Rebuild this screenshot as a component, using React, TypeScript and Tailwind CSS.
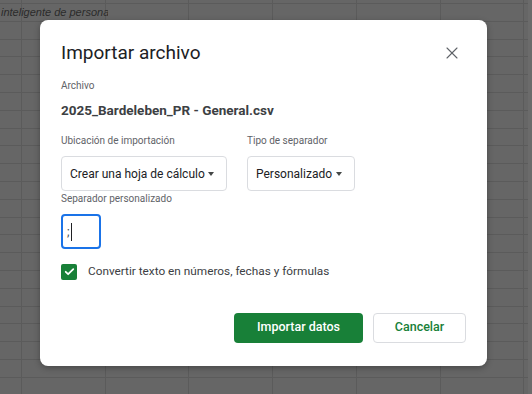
import { X } from 'lucide-react';

const colWidths = [22, 84, 83, 84, 84, 84, 83];
const rowCount = 22;

function SheetBackground() {
  return (
    <div className="flex flex-col">
      <div className="h-[3px] flex">
        {colWidths.map((w, i) => (
          <div key={i} style={{ width: w }} className="shrink-0 border-r border-[#5b5b5b]" />
        ))}
      </div>
      {Array.from({ length: rowCount }).map((_, r) => (
        <div key={r} className="relative flex h-[17.8px] border-t border-[#5b5b5b]">
          {colWidths.map((w, i) => (
            <div key={i} style={{ width: w }} className="shrink-0 border-r border-[#5b5b5b]" />
          ))}
          {r === 0 && (
            <div className="absolute left-[1px] top-0 w-[107px] overflow-hidden whitespace-nowrap text-[11px] italic leading-[17px] text-[#2b2b2b] font-['Liberation_Sans',Arial,sans-serif]">
              inteligente de personas
            </div>
          )}
        </div>
      ))}
    </div>
  );
}

function Caret() {
  return <span className="h-0 w-0 border-x-[3.5px] border-t-[4px] border-x-transparent border-t-[#444746]" />;
}

export default function App() {
  return (
    <div className="relative h-[394px] w-[532px] overflow-hidden bg-[#666666] font-['Roboto',sans-serif]">
      <SheetBackground />
      <div className="absolute right-0 top-0 h-full w-[4px] bg-[#6b6b6b]" />

      <div className="absolute left-[40px] top-[20px] flex h-[346px] w-[447px] flex-col rounded-[8px] bg-white px-[21px] pt-[19px] shadow-[0_2px_6px_rgba(0,0,0,0.3)]">
        <div className="flex items-center justify-between">
          <h1 className="text-[19px] leading-[28px] text-[#202124]">Importar archivo</h1>
          <X className="mr-[4px] h-[20px] w-[20px] text-[#5f6368]" strokeWidth={1.3} />
        </div>

        <div className="mt-[11px] text-[10px] leading-[16px] text-[#5f6368]">Archivo</div>
        <div className="mt-[6px] text-[13.5px] font-bold leading-[20px] text-[#3c4043]">
          2025_Bardeleben_PR - General.csv
        </div>

        <div className="mt-[13px] flex gap-[20px]">
          <div className="flex flex-col">
            <div className="text-[10px] leading-[16px] text-[#5f6368]">Ubicación de importación</div>
            <div className="mt-[7px] flex h-[35px] w-[166px] items-center justify-between whitespace-nowrap rounded-[4px] border border-[#dadce0] pl-[8px] pr-[12px] text-[12px] text-[#202124]">
              <span>Crear una hoja de cálculo</span>
              <Caret />
            </div>
          </div>
          <div className="flex flex-col">
            <div className="text-[10px] leading-[16px] text-[#5f6368]">Tipo de separador</div>
            <div className="mt-[7px] flex h-[35px] w-[108px] items-center justify-between whitespace-nowrap rounded-[4px] border border-[#dadce0] pl-[8px] pr-[12px] text-[12px] text-[#202124]">
              <span>Personalizado</span>
              <Caret />
            </div>
          </div>
        </div>

        <div className="mt-[1px] text-[10px] leading-[14px] text-[#5f6368]">Separador personalizado</div>
        <div className="mt-[8px] flex h-[35px] w-[40px] shrink-0 items-center rounded-[4px] border-2 border-[#1a73e8] pl-[4px] text-[12px] text-[#3c4043]">
          <span className="border-r border-[#202124] pr-[1px]">;</span>
        </div>

        <label className="mt-[14px] flex items-center gap-[11px]">
          <span className="flex h-[16px] w-[16px] items-center justify-center rounded-[2px] bg-[#188038]">
            <svg viewBox="0 0 24 24" className="h-[13px] w-[13px]" fill="none" stroke="white" strokeWidth="3.2" strokeLinecap="round" strokeLinejoin="round">
              <path d="M5 12.5l4.5 4.5L19 7.5" />
            </svg>
          </span>
          <span className="text-[11.8px] text-[#3c4043]">Convertir texto en números, fechas y fórmulas</span>
        </label>

        <div className="mt-[32px] flex justify-end gap-[10px]">
          <button className="h-[30px] w-[129px] rounded-[4px] bg-[#188038] text-[12.5px] font-medium text-white">
            Importar datos
          </button>
          <button className="h-[30px] w-[93px] rounded-[4px] border border-[#dadce0] bg-white text-[12.5px] font-medium text-[#188038]">
            Cancelar
          </button>
        </div>
      </div>
    </div>
  );
}
